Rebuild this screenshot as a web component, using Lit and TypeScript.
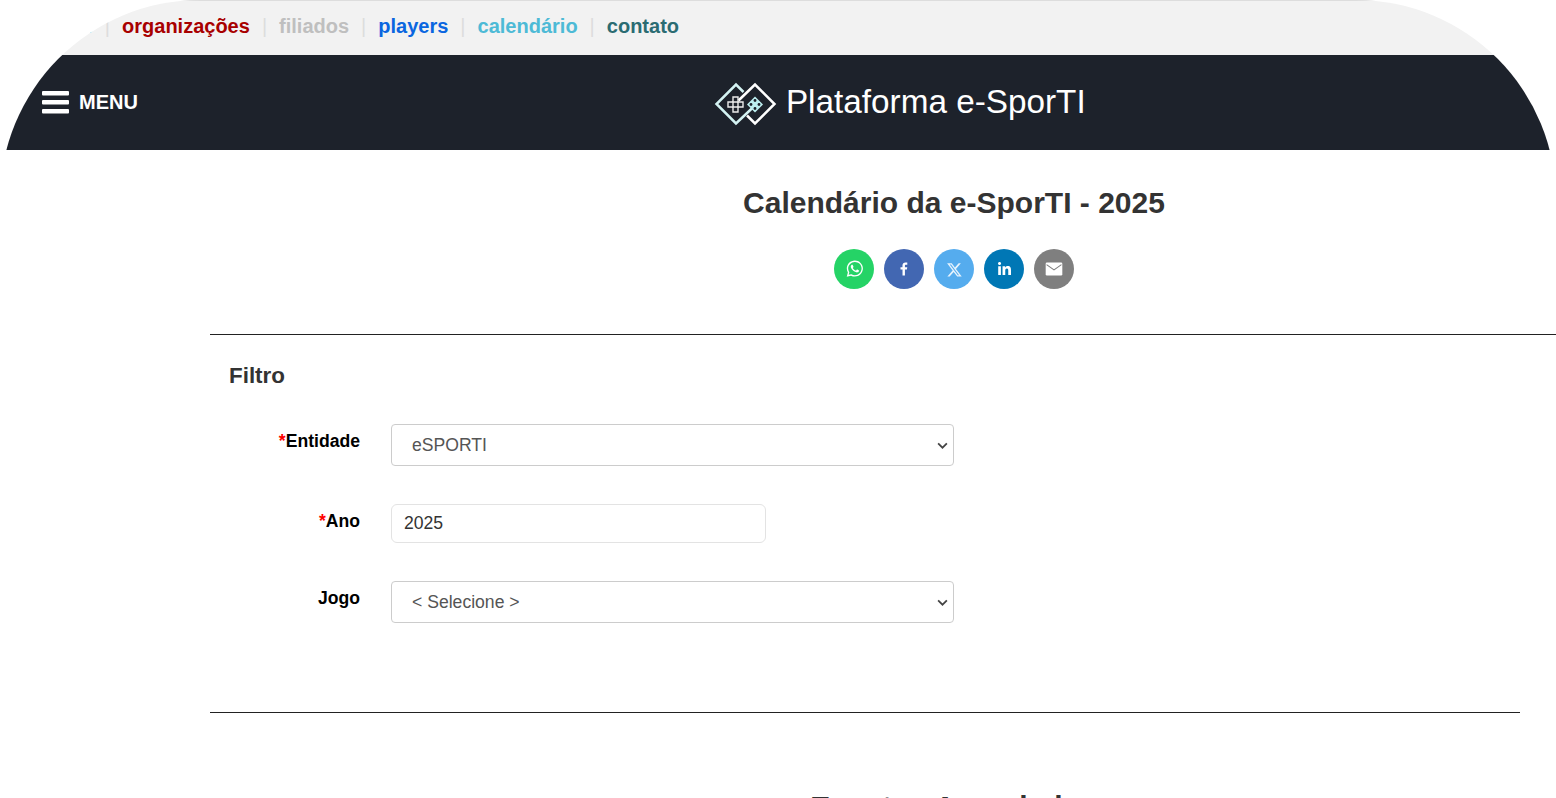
import { LitElement, css, html, svg } from 'lit';
import { customElement } from 'lit/decorators.js';

const NAV = [
  { label: 'jogos', color: '#0b7fb0' },
  { label: 'organizações', color: '#a80000' },
  { label: 'filiados', color: '#bfbfbf' },
  { label: 'players', color: '#0a66e0' },
  { label: 'calendário', color: '#4dbad6' },
  { label: 'contato', color: '#2b6c72' },
];

// share icons, drawn on a 64 box
const whatsapp = svg`<path d="m42.32286,33.93287c-0.5178,-0.2589 -3.04726,-1.49644 -3.52105,-1.66732c-0.4712,-0.17346 -0.81554,-0.2589 -1.15987,0.2589c-0.34175,0.51004 -1.33075,1.66474 -1.63108,2.00648c-0.30032,0.33658 -0.60064,0.36247 -1.11327,0.12945c-0.5178,-0.2589 -2.17994,-0.80259 -4.14759,-2.56312c-1.53269,-1.37217 -2.56312,-3.05503 -2.86603,-3.57283c-0.30033,-0.5178 -0.03366,-0.80259 0.22524,-1.06149c0.23301,-0.23301 0.5178,-0.59547 0.7767,-0.90616c0.25372,-0.31068 0.33657,-0.5178 0.51262,-0.85437c0.17088,-0.36246 0.08544,-0.64725 -0.04402,-0.90615c-0.12945,-0.2589 -1.15987,-2.79613 -1.58964,-3.80584c-0.41424,-1.00971 -0.84142,-0.88027 -1.15987,-0.88027c-0.29773,-0.02588 -0.64208,-0.02588 -0.98382,-0.02588c-0.34693,0 -0.90616,0.12945 -1.37736,0.62136c-0.4712,0.5178 -1.80194,1.76053 -1.80194,4.27186c0,2.51134 1.84596,4.945 2.10227,5.30747c0.2589,0.33657 3.63497,5.51458 8.80262,7.74113c1.23237,0.5178 2.1903,0.82848 2.94111,1.08738c1.23237,0.38836 2.35599,0.33657 3.24402,0.20712c0.99159,-0.15534 3.04985,-1.24272 3.47963,-2.45956c0.44013,-1.21683 0.44013,-2.22654 0.31068,-2.45955c-0.12945,-0.23301 -0.46601,-0.36247 -0.98382,-0.59548m-9.40068,12.84407l-0.02589,0c-3.05503,0 -6.08417,-0.82849 -8.72495,-2.38189l-0.62136,-0.37023l-6.47252,1.68286l1.73463,-6.29129l-0.41424,-0.64725c-1.70875,-2.71846 -2.6149,-5.85116 -2.6149,-9.07706c0,-9.39809 7.68934,-17.06155 17.15993,-17.06155c4.58253,0 8.88029,1.78642 12.11655,5.02268c3.23625,3.21036 5.02267,7.50812 5.02267,12.06476c-0.0078,9.3981 -7.69712,17.06155 -17.14699,17.06155m14.58906,-31.58846c-3.93529,-3.80584 -9.1133,-5.95471 -14.62789,-5.95471c-11.36055,0 -20.60848,9.2065 -20.61625,20.52564c0,3.61684 0.94757,7.14565 2.75211,10.26282l-2.92557,10.63564l10.93337,-2.85309c3.0136,1.63108 6.4052,2.4958 9.85634,2.49839l0.01037,0c11.36574,0 20.61884,-9.2091 20.62403,-20.53082c0,-5.48093 -2.14111,-10.64081 -6.03239,-14.51915" fill="#fff"/>`;
const facebook = svg`<path d="M34.1,47V33.3h4.6l0.7-5.3h-5.3v-3.4c0-1.5,0.4-2.6,2.6-2.6l2.8,0v-4.8c-0.5-0.1-2.2-0.2-4.1-0.2 c-4.1,0-6.9,2.5-6.9,7V28H24v5.3h4.6V47H34.1z" fill="#fff"/>`;
const xIcon = svg`<path d="M41.116 18.375h4.962l-10.8405 12.39 12.753 16.86H38.005l-7.821-10.2255L21.235 47.625H16.27l11.595-13.2525L15.631 18.375H25.87l7.0695 9.3465zm-1.7415 26.28h2.7495L24.376 21.189H21.4255z" fill="#fff" fill-opacity="0.85"/>`;
const linkedin = svg`<path d="M20.4,44h5.4V26.6h-5.4V44z M23.1,18c-1.7,0-3.1,1.4-3.1,3.1c0,1.7,1.4,3.1,3.1,3.1 c1.7,0,3.1-1.4,3.1-3.1C26.2,19.4,24.8,18,23.1,18z M39.5,26.2c-2.6,0-4.4,1.4-5.1,2.8h-0.1v-2.4h-5.2V44h5.4v-8.6 c0-2.3,0.4-4.5,3.2-4.5c2.8,0,2.8,2.6,2.8,4.6V44H46v-9.5C46,29.8,45,26.2,39.5,26.2z" fill="#fff"/>`;
const email = svg`<rect x="13" y="17" width="38" height="30" rx="3" fill="#fff"/><path d="M15 22l17 12 17-12" fill="none" stroke="#7f7f7f" stroke-width="2.500"/>`;

const SHARE = [
  { cls: 'wa', icon: whatsapp },
  { cls: 'fb', icon: facebook },
  { cls: 'tw', icon: xIcon },
  { cls: 'li', icon: linkedin },
  { cls: 'em', icon: email },
];

const CHEVRON =
  "url(\"data:image/svg+xml,%3Csvg xmlns='http://www.w3.org/2000/svg' viewBox='0 0 12 8'%3E%3Cpath d='M1 1.500l5 5 5-5' fill='none' stroke='%23444' stroke-width='2'/%3E%3C/svg%3E\")";

@customElement('app-root')
export class AppRoot extends LitElement {
  static styles = css`
    :host {
      display: block;
      font-family: 'Liberation Sans', Arial, sans-serif;
      color: #333;
    }

    .page {
      height: 798px;
      overflow: hidden;
      border-radius: 200px 200px 0 0;
      background: #fff;
    }

    .topbar {
      box-sizing: border-box;
      height: 55px;
      padding: 0 0 4px 39.500px;
      background: #f2f2f2;
      border-top: 1px solid #ddd;
      display: flex;
      align-items: center;
      font-size: 20px;
      font-weight: bold;
    }

    .sep {
      color: #ddd;
      font-weight: normal;
      margin: 0 12px;
    }

    .header {
      height: 95px;
      background: #1d222b;
      color: #fff;
      display: flex;
      align-items: center;
      padding-left: 42px;
    }

    .menu {
      display: flex;
      align-items: center;
      gap: 10px;
      font-size: 20px;
      font-weight: bold;
    }

    .burger {
      display: block;
      width: 27px;
      height: 23px;
    }

    .brand {
      display: flex;
      align-items: center;
      gap: 10px;
      margin-left: 577px;
      font-size: 33.300px;
    }

    .brand span {
      margin: -2px 0 0 -1px;
    }

    .logo {
      display: block;
      width: 62px;
      height: 42px;
      overflow: visible;
    }

    .content {
      padding-left: 210px;
    }

    h1 {
      margin: 35px 0 0 142px;
      font-size: 30px;
      line-height: 36px;
      text-align: center;
    }

    .share {
      display: flex;
      justify-content: center;
      gap: 10px;
      margin: 28px 0 45px 142px;
    }

    .share span {
      width: 40px;
      height: 40px;
      border-radius: 50%;
      display: flex;
      align-items: center;
      justify-content: center;
    }

    .wa { background: #25d366; }
    .fb { background: #4267b2; }
    .tw { background: #55acee; }
    .li { background: #0077b5; }
    .em { background: #7f7f7f; }

    .wa svg { width: 25px; height: 25px; }
    .fb svg { width: 28px; height: 28px; }
    .tw svg { width: 29px; height: 29px; }
    .li svg { width: 32px; height: 32px; }
    .em svg { width: 28px; height: 28px; }

    hr {
      margin: 0;
      border: 0;
      border-top: 1px solid #222;
    }

    .filter {
      padding-top: 28px;
    }

    h2 {
      margin: 0 0 35px 19px;
      font-size: 22.400px;
      line-height: 26px;
    }

    .form {
      display: grid;
      grid-template-columns: 150px 1fr;
      column-gap: 31px;
      row-gap: 38px;
      margin-bottom: 89px;
    }

    label {
      padding-top: 7px;
      font-size: 17.600px;
      line-height: 20px;
      font-weight: bold;
      color: #000;
      text-align: right;
    }

    .req {
      color: #f00;
    }

    select,
    input {
      display: block;
      box-sizing: border-box;
      font-family: inherit;
      font-size: 17.600px;
      background-color: #fff;
    }

    select {
      appearance: none;
      width: 563px;
      height: 42px;
      padding-left: 20px;
      border: 1px solid #ccc;
      border-radius: 4px;
      color: #555;
      background-image: ${css([CHEVRON] as unknown as TemplateStringsArray)};
      background-repeat: no-repeat;
      background-size: 11px 7px;
      background-position: right 5px center;
    }

    input {
      width: 375px;
      height: 39px;
      padding: 0 12px;
      border: 1px solid #e3e3e3;
      border-radius: 6px;
      color: #333;
    }

    .second {
      width: 1310px;
    }

    h3 {
      margin: 77px 0 0;
      width: 1488px;
      font-size: 30px;
      line-height: 33px;
      text-align: center;
    }
  `;

  private renderLogo() {
    return html`<svg class="logo" viewBox="0 0 62 42">
      <g fill="none" stroke-width="2.500">
        <path d="M28.500 10L21 2.500 1.500 22 21 41.500 40 23.500" stroke="#d4f3f3" />
        <path d="M23.500 18.500L40 2.500 59.500 22 40 41.500 32 33.500" stroke="#fff" />
      </g>
      <g fill="none" stroke="#ececec" stroke-width="1.400">
        <path d="M18 15h5v5h5v5h-5v5h-5v-5h-5v-5h5z" />
        <path d="M18 20h5v5h-5z" />
      </g>
      <path d="M40 14.500l8 8-8 8-8-8z" fill="#bdeff0" />
      <g fill="#1d222b">
        <circle cx="40" cy="18.500" r="1.400" />
        <circle cx="40" cy="26.500" r="1.400" />
        <circle cx="36" cy="22.500" r="1.400" />
        <circle cx="44" cy="22.500" r="1.400" />
      </g>
    </svg>`;
  }

  protected render(): unknown {
    return html`
      <div class="page">
        <nav class="topbar">
          ${NAV.map(
            (n, i) => html`${i > 0 ? html`<span class="sep">|</span>` : ''}<span style="color: ${n.color}">${n.label}</span>`,
          )}
        </nav>
        <header class="header">
          <div class="menu">
            <svg class="burger" viewBox="0 0 27 23" fill="#fff">
              <rect y="0" width="27" height="4.500" rx="1" />
              <rect y="9" width="27" height="4.500" rx="1" />
              <rect y="18" width="27" height="4.500" rx="1" />
            </svg>
            MENU
          </div>
          <div class="brand">${this.renderLogo()}<span>Plataforma e-SporTI</span></div>
        </header>
        <main class="content">
          <h1>Calendário da e-SporTI - 2025</h1>
          <div class="share">
            ${SHARE.map((s) => html`<span class=${s.cls}><svg viewBox="0 0 64 64">${s.icon}</svg></span>`)}
          </div>
          <hr />
          <section class="filter">
            <h2>Filtro</h2>
            <div class="form">
              <label><span class="req">*</span>Entidade</label>
              <select><option>eSPORTI</option></select>
              <label><span class="req">*</span>Ano</label>
              <input type="text" value="2025" />
              <label>Jogo</label>
              <select><option>&lt; Selecione &gt;</option></select>
            </div>
          </section>
          <hr class="second" />
          <h3>Eventos Agendados</h3>
        </main>
      </div>
    `;
  }
}
